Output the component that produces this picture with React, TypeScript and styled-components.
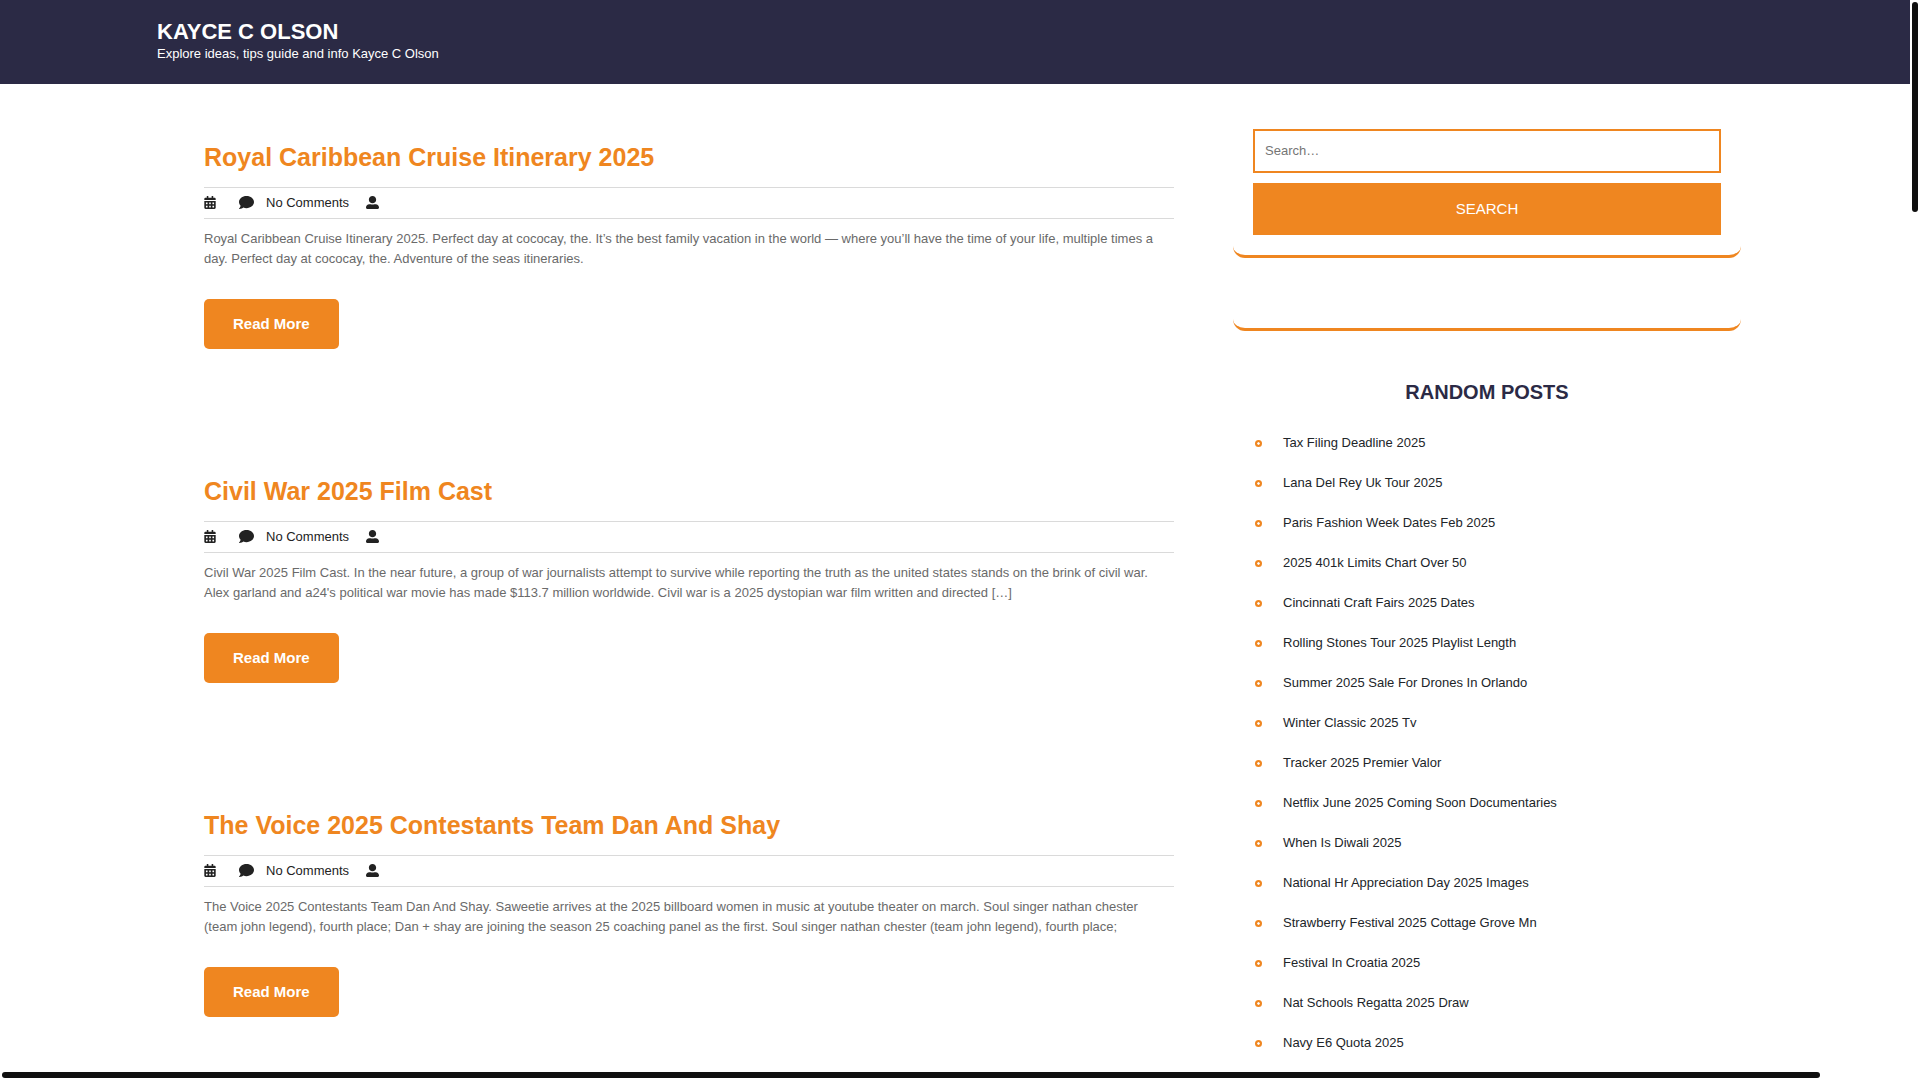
import React from 'react';
import styled, { createGlobalStyle } from 'styled-components';
import { FaCalendarAlt, FaComment, FaUserAlt } from 'react-icons/fa';

const orange = '#ef8620';
const navy = '#2b2a45';

const GlobalStyle = createGlobalStyle`
  *, *::before, *::after { box-sizing: border-box; }
  body {
    margin: 0;
    background: #fff;
    color: #212529;
    font: 13px/20px "Liberation Sans", Arial, sans-serif;
  }
  h1, h2, p, ul { margin: 0; padding: 0; }
  a { color: inherit; text-decoration: none; }
`;

const Frame = styled.div`
  display: grid;
  grid-template: minmax(0, 1fr) 10px / minmax(0, 1fr) 10px;
  height: 100vh;
  overflow: hidden;
`;

const View = styled.div`
  overflow: hidden;
`;

const Track = styled.div<{ $vertical?: boolean }>`
  padding: 2px;
  grid-area: ${p => (p.$vertical ? '1 / 2' : '2 / 1')};
`;

const Thumb = styled.div<{ $vertical?: boolean }>`
  width: ${p => (p.$vertical ? '100%' : '95.4%')};
  height: ${p => (p.$vertical ? '19.7%' : '100%')};
  border-radius: 3px;
  background: #0f0f0f;
`;

const Header = styled.header`
  padding: 20px 157px;
  min-height: 84px;
  background: ${navy};
  color: #fff;
`;

const SiteTitle = styled.h1`
  font-size: 22px;
  line-height: 24px;
`;

const Columns = styled.div`
  display: flex;
  align-items: flex-start;
  gap: 59px;
  padding: 25px 169px 0 204px;
`;

const Main = styled.main`
  flex: 1;
  min-width: 0;
`;

const Article = styled.article`
  padding: 33px 0 94px;
`;

const PostTitle = styled.h2`
  margin-bottom: 15px;
  color: ${orange};
  font-size: 25px;
  line-height: 30px;
`;

const Meta = styled.div`
  display: flex;
  align-items: center;
  height: 32px;
  border: solid #dadada;
  border-width: 1px 0;
  color: #222;
`;

const MetaItem = styled.span<{ $icon: number; $space?: number }>`
  display: flex;
  align-items: center;
  gap: 12px;
  margin-right: ${p => p.$space ?? 0}px;

  svg {
    width: ${p => p.$icon}px;
    margin-bottom: 2px;
  }
`;

const Excerpt = styled.p`
  margin: 10px 0 30px;
  color: #6a6a6a;
`;

const ReadMore = styled.a`
  display: inline-block;
  padding: 15px 29px;
  border-radius: 5px;
  background: ${orange};
  color: #fff;
  font-size: 15px;
  font-weight: bold;
  vertical-align: top;
`;

const Sidebar = styled.aside`
  flex: 0 0 508px;
`;

const Widget = styled.section`
  margin-bottom: 30px;
  padding: 20px;
  border-bottom: 3px solid ${orange};
  border-radius: 12px;
`;

const SearchForm = styled.form`
  display: grid;
  gap: 10px;
`;

const SearchInput = styled.input`
  height: 44px;
  padding: 9px 10px 11px;
  border: 2px solid ${orange};
  font: inherit;
  &::placeholder { color: #757575; opacity: 1; }
`;

const SearchButton = styled.button`
  height: 52px;
  padding: 0 0 2px;
  border: 0;
  background: ${orange};
  color: #fff;
  font: 15px "Liberation Sans", Arial, sans-serif;
  text-transform: uppercase;
`;

const WidgetTitle = styled.h2`
  margin-bottom: 20px;
  color: ${navy};
  font-size: 20px;
  line-height: 22px;
  text-align: center;
  text-transform: uppercase;
`;

const List = styled.ul`
  list-style: none;
`;

const Item = styled.li`
  display: flex;
  align-items: center;
  gap: 21px;
  height: 40px;
  padding-left: 2px;
  &::before {
    content: "";
    width: 7px;
    height: 7px;
    border-radius: 50%;
    background: radial-gradient(circle, #fff 18%, ${orange} 32%);
  }
`;

const posts = [
  {
    title: 'Royal Caribbean Cruise Itinerary 2025',
    text: 'Royal Caribbean Cruise Itinerary 2025. Perfect day at cococay, the. It’s the best family vacation in the world — where you’ll have the time of your life, multiple times a day. Perfect day at cococay, the. Adventure of the seas itineraries.',
  },
  {
    title: 'Civil War 2025 Film Cast',
    text: "Civil War 2025 Film Cast. In the near future, a group of war journalists attempt to survive while reporting the truth as the united states stands on the brink of civil war. Alex garland and a24's political war movie has made $113.7 million worldwide. Civil war is a 2025 dystopian war film written and directed […]",
  },
  {
    title: 'The Voice 2025 Contestants Team Dan And Shay',
    text: 'The Voice 2025 Contestants Team Dan And Shay. Saweetie arrives at the 2025 billboard women in music at youtube theater on march. Soul singer nathan chester (team john legend), fourth place; Dan + shay are joining the season 25 coaching panel as the first. Soul singer nathan chester (team john legend), fourth place;',
  },
];

const randomPosts = [
  'Tax Filing Deadline 2025',
  'Lana Del Rey Uk Tour 2025',
  'Paris Fashion Week Dates Feb 2025',
  '2025 401k Limits Chart Over 50',
  'Cincinnati Craft Fairs 2025 Dates',
  'Rolling Stones Tour 2025 Playlist Length',
  'Summer 2025 Sale For Drones In Orlando',
  'Winter Classic 2025 Tv',
  'Tracker 2025 Premier Valor',
  'Netflix June 2025 Coming Soon Documentaries',
  'When Is Diwali 2025',
  'National Hr Appreciation Day 2025 Images',
  'Strawberry Festival 2025 Cottage Grove Mn',
  'Festival In Croatia 2025',
  'Nat Schools Regatta 2025 Draw',
  'Navy E6 Quota 2025',
];

export default function App() {
  return (
    <Frame>
      <GlobalStyle />
      <View>
        <Header>
          <SiteTitle><a href="#">KAYCE C OLSON</a></SiteTitle>
          <p>Explore ideas, tips guide and info Kayce C Olson</p>
        </Header>
        <Columns>
          <Main>
            {posts.map(post => (
              <Article key={post.title}>
                <PostTitle><a href="#">{post.title}</a></PostTitle>
                <Meta>
                  <MetaItem $icon={12} $space={23}><FaCalendarAlt size={13} /></MetaItem>
                  <MetaItem $icon={15} $space={17}><FaComment size={15} />No Comments</MetaItem>
                  <MetaItem $icon={13}><FaUserAlt size={13} /></MetaItem>
                </Meta>
                <Excerpt>{post.text}</Excerpt>
                <ReadMore href="#">Read More</ReadMore>
              </Article>
            ))}
          </Main>
          <Sidebar>
            <Widget>
              <SearchForm onSubmit={e => e.preventDefault()}>
                <SearchInput type="search" placeholder="Search…" aria-label="Search for" />
                <SearchButton>Search</SearchButton>
              </SearchForm>
            </Widget>
            <Widget />
            <Widget>
              <WidgetTitle>Random Posts</WidgetTitle>
              <List>
                {randomPosts.map(name => <Item key={name}><a href="#">{name}</a></Item>)}
              </List>
            </Widget>
          </Sidebar>
        </Columns>
      </View>
      <Track $vertical><Thumb $vertical /></Track>
      <Track><Thumb /></Track>
    </Frame>
  );
}
